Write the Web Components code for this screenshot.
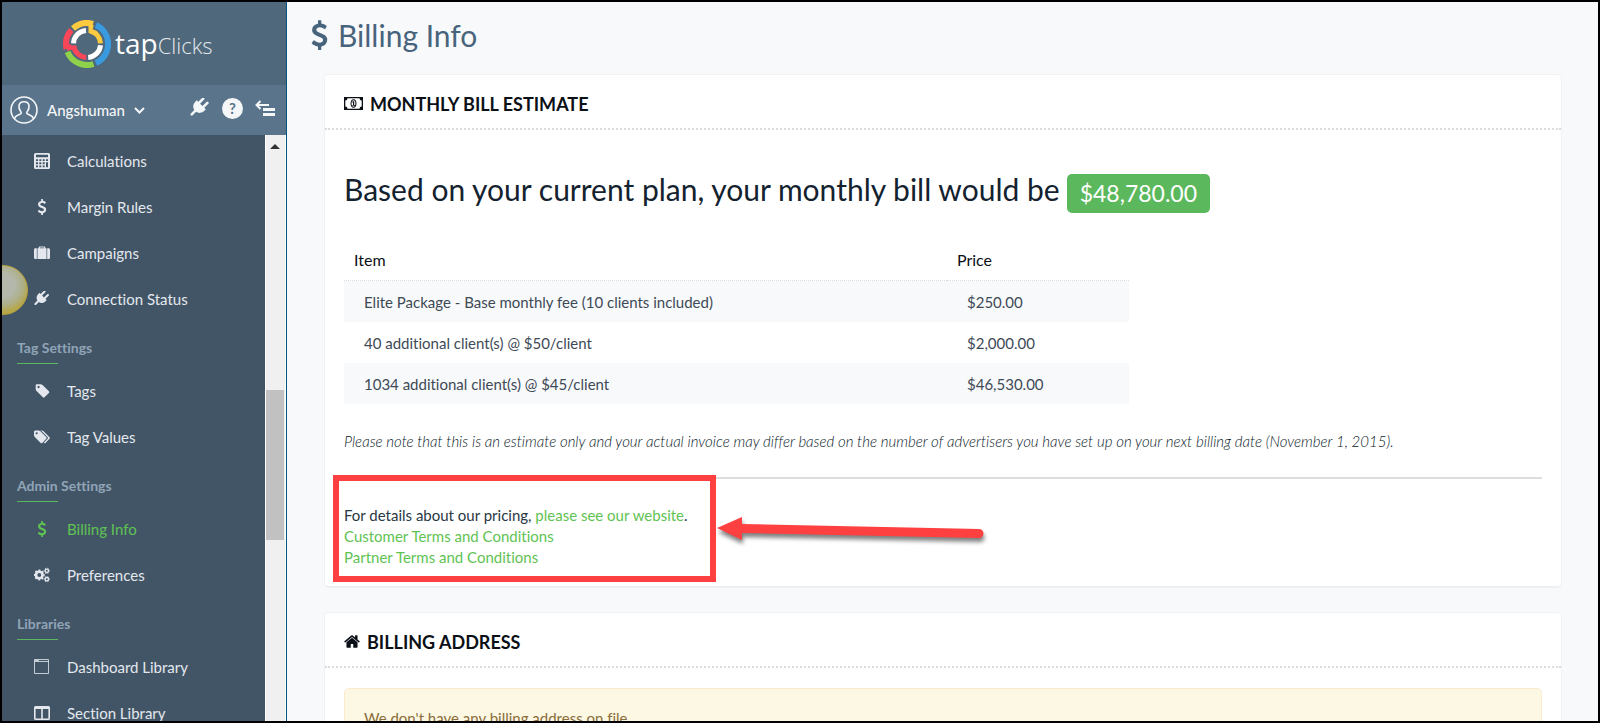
<!DOCTYPE html>
<html lang="en">
<head>
<meta charset="utf-8">
<title>Billing Info - tapClicks</title>
<style>
html,body{margin:0;height:100%;background:#000}
body{font-family:Lato,"Liberation Sans",sans-serif;font-variant-ligatures:none;color:#1b2a38;overflow:hidden}
</style>
</head>
<body>
<app-shell>
  <side-bar slot="side">
    <nav-item icon="calc">Calculations</nav-item>
    <nav-item icon="dollar">Margin Rules</nav-item>
    <nav-item icon="suitcase">Campaigns</nav-item>
    <nav-item icon="plug">Connection Status</nav-item>
    <nav-heading>Tag Settings</nav-heading>
    <nav-item icon="tag">Tags</nav-item>
    <nav-item icon="tags">Tag Values</nav-item>
    <nav-heading>Admin Settings</nav-heading>
    <nav-item icon="dollar" active>Billing Info</nav-item>
    <nav-item icon="cogs">Preferences</nav-item>
    <nav-heading>Libraries</nav-heading>
    <nav-item icon="window">Dashboard Library</nav-item>
    <nav-item icon="columns">Section Library</nav-item>
  </side-bar>
  <page-title icon="dollar">Billing Info</page-title>
  <info-panel icon="money" heading="Monthly Bill Estimate">
    <bill-estimate></bill-estimate>
  </info-panel>
  <info-panel icon="home" heading="Billing Address">
    <alert-box>We don't have any billing address on file.</alert-box>
  </info-panel>
</app-shell>
<script>
const ICONS = {
  dollar: ['384 0 1024 1792', '<path d="M1362 1185q0 153-99.5 263.5t-258.5 136.5v175q0 14-9 23t-23 9h-135q-13 0-22.5-9.5t-9.5-22.5v-175q-66-9-127.500-31t-101.500-44.500-74-48-46.500-37.500-17.500-18q-17-21-2-41l103-135q7-10 23-12 15-2 24 9l2 2q113 99 243 125 37 8 74 8 81 0 142.500-43t61.500-122q0-28-15-53t-33.500-42-58.500-37.500-66-32-80-32.500q-39-16-61.500-25t-61.500-26.500-62.500-31-56.500-35.500-53.500-42.500-43.500-49-35.500-58-21-66.500-8.500-78q0-138 98-242t255-134v-180q0-13 9.500-22.500t22.500-9.500h135q14 0 23 9t9 23v176q57 6 110.500 23t87 33.500 63.500 37.500 39 29 15 14q17 18 5 38l-81 146q-8 15-23 16-14 3-27-7-3-3-14.500-12t-39-26.500-58.500-32-74.500-26-85.500-11.500q-95 0-155 43t-60 111q0 26 8.500 48t29.500 41.500 39.500 33 56 31 60.500 27 70 27.500q53 20 81 31.500t76 35 75.500 42.500 62 50 53 63.500 31.500 76.500 13 94z"/>'],
  tag: ['-64 0 1792 1792', '<path d="M576 448q0-53-37.500-90.500t-90.500-37.500-90.500 37.500-37.500 90.500 37.500 90.500 90.500 37.500 90.500-37.500 37.500-90.500zm1067 576q0 53-37 90l-491 492q-39 37-91 37-53 0-90-37l-715-716q-38-37-64.500-101t-26.500-117v-416q0-52 38-90t90-38h416q53 0 117 26.500t102 64.500l715 714q37 39 37 91z"/>'],
  tags: ['0 0 1920 1792', '<path d="M448 448q0-53-37.500-90.500t-90.500-37.500-90.500 37.500-37.500 90.500 37.500 90.500 90.500 37.500 90.500-37.500 37.500-90.500zm1067 576q0 53-37 90l-491 492q-39 37-91 37-53 0-90-37l-715-716q-38-37-64.500-101t-26.500-117v-416q0-52 38-90t90-38h416q53 0 117 26.500t102 64.500l715 714q37 39 37 91zm384 0q0 53-37 90l-491 492q-39 37-91 37-36 0-59-14t-53-45l470-470q37-37 37-90 0-52-37-91l-715-714q-38-38-102-64.500t-117-26.500h224q53 0 117 26.500t102 64.500l715 714q37 39 37 91z"/>'],
  home: ['64 128 1664 1536', '<path d="M1472 992v480q0 26-19 45t-45 19h-384v-384h-256v384h-384q-26 0-45-19t-19-45v-480q0-1 .5-3t.5-3l575-474 575 474q1 2 1 6zm223-69l-62 74q-8 9-21 11h-3q-13 0-21-7l-692-577-692 577q-12 8-24 7-13-2-21-11l-62-74q-8-10-7-23.500t11-21.500l719-599q32-26 76-26t76 26l244 204v-195q0-14 9-23t23-9h192q14 0 23 9t9 23v408l219 182q10 8 11 21.500t-7 23.500z"/>'],
  plug: ['-60 60 1980 1980', '<path d="M1755 453q37 38 37 90.500t-37 90.500l-401 400 150 150-160 160q-163 163-389.500 186.500t-411.500-100.500l-362 362h-181v-181l362-362q-124-185-100.500-411.500t186.500-389.500l160-160 150 150 400-401q38-37 91-37t90 37 37 90.500-37 90.500l-400 401 234 234 401-400q38-37 91-37t90 37z"/>'],
  calc: ['0 0 16 16', '<path fill-rule="evenodd" d="M1.500 0h13Q16 0 16 1.500v13q0 1.500-1.500 1.500h-13Q0 16 0 14.500v-13Q0 0 1.500 0zM2 1.800v2.500h12V1.800zM2 6.200v1.900h2V6.200zm3.300 0v1.900h2V6.200zm3.400 0v1.900h2V6.200zm3.300 0v1.900h2V6.200zM2 9.300v1.900h2V9.300zm3.300 0v1.900h2V9.300zm3.400 0v1.900h2V9.300zM2 12.400v1.900h2v-1.900zm3.300 0v1.900h2v-1.900zm3.400 0v1.900h2v-1.900zM12 9.300v5h2v-5z"/>'],
  suitcase: ['0 0 17 16', '<path fill-rule="evenodd" d="M5 3V2Q5 1 6 1h5q1 0 1 1v1h1.300v11.500H3.700V3zm1.300 0h4.400v-.8H6.300zM1.500 3H3v11.500H1.500Q0 14.500 0 13V4.500Q0 3 1.500 3zM14 3h1.500Q17 3 17 4.500V13q0 1.500-1.500 1.500H14z"/>'],
  cogs: ['0 0 17 16', '<g fill="none" stroke="currentColor"><circle cx="5.600" cy="8" r="3.500" stroke-width="2.800"/><circle cx="5.600" cy="8" r="5" stroke-width="1.600" pathLength="32" stroke-dasharray="2.200 1.800" stroke-dashoffset="1"/><circle cx="13.600" cy="3.600" r="1.800" stroke-width="1.500"/><circle cx="13.600" cy="3.600" r="2.800" stroke-width="1" pathLength="24" stroke-dasharray="2 2" stroke-dashoffset="1"/><circle cx="13.600" cy="12.400" r="1.800" stroke-width="1.500"/><circle cx="13.600" cy="12.400" r="2.800" stroke-width="1" pathLength="24" stroke-dasharray="2 2" stroke-dashoffset="1"/></g>'],
  window: ['1 1 16 16', '<path fill="none" stroke="currentColor" opacity=".8" d="M1.500 1.500h14v14h-14zM1.500 3.500h14M2 2.500h4"/>'],
  columns: ['0 0 16 14', '<path fill-rule="evenodd" d="M1.500 0h13Q16 0 16 1.500v11q0 1.500-1.500 1.500h-13Q0 14 0 12.500v-11Q0 0 1.500 0zM1.600 3v9.400h5.600V3zm7.200 0v9.400h5.600V3z"/>'],
  money: ['0 0 19 13', '<path fill-rule="evenodd" d="M0 0h19v13H0zm3.500 1.300Q3.500 3.500 1.300 3.500v6q2.200 0 2.200 2.200h12q0-2.200 2.200-2.200v-6q-2.200 0-2.200-2.200z"/><path fill-rule="evenodd" d="M9.500 2.200c4 0 4 8.600 0 8.600s-4-8.600 0-8.600zm0 1c-2.600 0-2.600 6.600 0 6.600s2.600-6.600 0-6.600zM9 4.300h1.200v3.600h.8v.9H8.200v-.9H9V5.500h-.8v-.7z"/>'],
  user: ['0 0 28 28', '<g fill="none" stroke="currentColor" stroke-width="1.600"><circle cx="14" cy="14" r="13"/><path d="M14 5.800c-6.200 0-6 6.500-3.200 9.900.9 1.200.3 2-.6 2.400-2.600 1-5 1.600-5.600 4.400M14 5.800c6.200 0 6 6.500 3.200 9.900-.9 1.200-.3 2 .6 2.400 2.600 1 5 1.600 5.600 4.400"/></g>'],
  chevron: ['0 0 11 7', '<path fill="none" stroke="currentColor" stroke-width="2" d="M1 1l4.500 4.500L10 1"/>'],
  collapse: ['0 0 20 17', '<path fill="none" stroke="currentColor" stroke-width="2" d="M1.500 5H14M5.500 1l-4 4 4 4"/><path d="M8 8h12v3H8zM8 13h12v3H8z"/>']
};
function define(name, css, html, setup){
  const t = document.createElement('template');
  t.innerHTML = '<style>' + css + '</style>' + html;
  customElements.define(name, class extends HTMLElement{
    connectedCallback(){
      if(this.shadowRoot) return;
      this.attachShadow({mode:'open'}).append(t.content.cloneNode(true));
      if(setup) setup(this, this.shadowRoot);
    }
  });
}
const setIcon = (host, root) => root.querySelector('ui-icon').setAttribute('name', host.getAttribute('icon'));

customElements.define('ui-icon', class extends HTMLElement{
  static observedAttributes = ['name'];
  connectedCallback(){ this.draw(); }
  attributeChangedCallback(){ this.draw(); }
  draw(){
    const icon = ICONS[this.getAttribute('name')];
    if(!icon) return;
    if(!this.shadowRoot) this.attachShadow({mode:'open'});
    this.shadowRoot.innerHTML = '<style>:host{display:inline-flex;width:16px;height:16px;flex:none}svg{width:100%;height:100%;fill:currentColor}</style><svg aria-hidden="true" viewBox="' + icon[0] + '">' + icon[1] + '</svg>';
  }
});

define('app-shell', `
:host{box-sizing:border-box;display:grid;grid-template-columns:285px minmax(0,1fr);height:100vh;border:2px solid #000;overflow:hidden;position:relative}
main{background:#f8f9fb;overflow:hidden;padding:0 36px 0 37px;display:flex;flex-direction:column;gap:24px}
main ::slotted(*){flex:none}
.bubble{position:absolute;left:-24px;top:263px;width:48px;height:48px;border:1px solid #b9a33c;border-radius:50%;background:radial-gradient(circle at 50% 40%,#b4b8ac 30%,#aeb08a 52%,#b5a646 72%)}
.side{display:grid;min-height:0}
`, `<div class="side"><slot name="side"></slot></div><main><slot></slot></main><div class="bubble" aria-hidden="true"></div>`);

define('brand-logo', `
:host{display:flex;align-items:center;gap:4px;height:83px;padding-left:61px;box-sizing:border-box;background:#4f687b;color:#fff;font-family:"Open Sans",sans-serif}
svg{width:48px;height:48px;flex:none}
.word{display:flex;align-items:baseline;line-height:40px}
.tap{font-size:28px}
.clicks{font-size:22px;font-weight:300;color:#e4e9ed}
`, `<svg viewBox="-24 -24 48 48" aria-hidden="true"><g fill="none" stroke-width="6">
<path stroke="#3a9ae0" d="M8.900-19.100A21 21 0 0 1 8.900 19.100"/>
<path stroke="#8fd14a" d="M6.500 20A21 21 0 0 1-19.500 7.900"/>
<path stroke="#fa4659" d="M-20.400 5A21 21 0 0 1-15.600-14"/>
<path stroke="#fdca40" d="M-14-15.600A21 21 0 0 1 6-20.100"/></g>
<g fill="none" stroke-width="5">
<path stroke="#fdca40" d="M3.500-13A13.500 13.500 0 0 1 13.500-.7"/>
<path stroke="#fff" d="M13.500 1.200A13.500 13.500 0 0 1 1.200 13.500"/>
<path stroke="#fa4659" d="M-.7 13.500A13.500 13.500 0 0 1-13.300 2.500"/>
<path stroke="#fff" d="M-13.500-.7A13.500 13.500 0 0 1-1-13.500"/></g>
<path fill="#fdca40" d="M1.500-20L6.800-19 4.500-10.500 1.500-11z"/><path fill="#fa4659" d="M-20 7L-19-1-15 1.500-10.500 1.500-11 4.500z"/></svg>
<div class="word"><span class="tap">tap</span><span class="clicks">Clicks</span></div>`);

define('user-bar', `
:host{display:flex;align-items:center;height:50px;background:#5a758b;color:#f4f6f8;padding:0 11px 0 8px;box-sizing:border-box}
button{display:flex;align-items:center;border:0;background:none;padding:0;margin:0;font:inherit;color:inherit}
.user{gap:9px;font-size:15px;font-weight:500}
.user ui-icon:first-child{width:28px;height:28px}
.user ui-icon:last-child{width:11px;height:7px}
.tools{display:flex;align-items:center;gap:12px;margin-left:auto;padding-bottom:4px}
.plug ui-icon{width:20px;height:20px}
.help{width:21px;height:21px;border-radius:50%;background:#f4f6f8;color:#5a758b;justify-content:center;font-size:15px;font-weight:700;line-height:21px}
.fold ui-icon{width:20px;height:17px}
`, `<button class="user" type="button"><ui-icon name="user"></ui-icon><span>Angshuman</span><ui-icon name="chevron"></ui-icon></button>
<div class="tools"><button class="plug" type="button" aria-label="Connections"><ui-icon name="plug"></ui-icon></button><button class="help" type="button">?</button><button class="fold" type="button" aria-label="Collapse menu"><ui-icon name="collapse"></ui-icon></button></div>`);

define('side-bar', `
:host{display:grid;grid-template-rows:auto auto minmax(0,1fr);min-height:0;background:#425566;border-right:1px solid #00567c;box-sizing:border-box}
.body{display:flex;min-height:0}
nav{flex:1;overflow:hidden;padding-top:3px}
.track{width:21px;box-sizing:border-box;background:#f0f0f0;border-left:1px solid #fff;border-right:1px solid #fff;padding:0 1px 0 0;display:flex;flex-direction:column;align-items:center}
.up{border:5px solid transparent;border-top:0;border-bottom-color:#333;margin-top:9px}
.thumb{width:18px;height:150px;background:#c1c1c1;margin-top:241px}
`, `<brand-logo></brand-logo><user-bar></user-bar><div class="body"><nav><slot></slot></nav><div class="track" aria-hidden="true"><div class="up"></div><div class="thumb"></div></div></div>`);

define('nav-item', `
:host{display:block;color:#e4e8ee}
:host([active]){color:#5fc353}
a{display:flex;align-items:center;gap:17px;height:46px;padding-left:32px;color:inherit;text-decoration:none;font-size:15px}
ui-icon{width:16px;height:16px}
`, `<a href="#"><ui-icon></ui-icon><span><slot></slot></span></a>`, setIcon);

define('nav-heading', `
:host{display:block;height:46px;padding:14px 0 0 15px;box-sizing:border-box;color:#90a4b7}
h2{margin:0;font-size:14px;line-height:24px;font-weight:700}
i{display:block;width:41px;height:1px;margin-top:3px;background:#5cb85c}
`, `<h2><slot></slot></h2><i></i>`);

define('page-title', `
:host{display:block;margin:14px 0 -4px -13px;color:#48647c}
h1{margin:0;display:flex;align-items:center;gap:10px;font-size:30px;font-weight:400;line-height:38px}
ui-icon{width:17px;height:30px}
`, `<h1><ui-icon></ui-icon><span><slot></slot></span></h1>`, setIcon);

define('info-panel', `
:host{display:block;background:#fff;border:1px solid #f0f1f2;border-bottom:2px solid #eeeff0;border-radius:5px}
h2{margin:0;display:flex;align-items:center;gap:7px;height:53px;padding:4px 19px 0;box-sizing:border-box;font-size:18px;font-weight:700;color:#0b1016;text-transform:uppercase}
.head{border-bottom:2px dotted #dcdcdc}
.body{padding:20px 19px 0}
ui-icon{width:19px;height:13px}
:host([icon="home"]) ui-icon{width:16px;height:15px}
`, `<div class="head"><h2><ui-icon></ui-icon><span></span></h2></div><div class="body"><slot></slot></div>`, (h,r)=>{
  setIcon(h,r); r.querySelector('span').textContent = h.getAttribute('heading');
});

define('price-badge', `
:host{display:inline-block;background:#5cb85c;color:#fff;border-radius:5px;font-size:23px;font-weight:400;line-height:39px;padding:0 13px}
`, `<slot></slot>`);

define('bill-table', `
:host{display:block;width:785px;max-width:100%}
table{width:100%;border-collapse:collapse;font-size:15px;table-layout:fixed}
th{text-align:left;font-weight:400;color:#0b1016;height:41px;padding:0 10px;font-size:16px;border-bottom:1px dotted #ddd}
th:first-child{width:583px}
td{height:41px;padding:0 20px;color:#3e4a56;line-height:20px}
tbody tr:nth-child(odd){background:#f8f9fb}
`, `<table><thead><tr><th>Item</th><th>Price</th></tr></thead><tbody>
<tr><td>Elite Package - Base monthly fee (10 clients included)</td><td>$250.00</td></tr>
<tr><td>40 additional client(s) @ $50/client</td><td>$2,000.00</td></tr>
<tr><td>1034 additional client(s) @ $45/client</td><td>$46,530.00</td></tr></tbody></table>`);

define('callout-arrow', `
:host{display:block;width:272px;height:36px}
svg{display:block;width:100%;height:100%;overflow:visible;filter:drop-shadow(1px 4px 2px rgba(0,0,0,.5))}
`, `<svg viewBox="0 0 272 36" aria-hidden="true"><path fill="#ff4040" d="M0 12L25 1v7l237 5a4 4 0 0 1 0 9L25 17v7z"/></svg>`);

define('pricing-details', `
:host{display:block;position:relative;margin:0 0 0 -11px;width:383px;height:107px;box-sizing:border-box;border:6px solid #ff4040;padding:24px 5px 0;font-size:15px;line-height:21px;color:#2a3744}
p{margin:0;white-space:nowrap}
a{color:#5fc353;text-decoration:none}
callout-arrow{position:absolute;left:378px;top:35px}
`, `<p>For details about our pricing, <a href="#">please see our website</a>.</p><p><a href="#">Customer Terms and Conditions</a></p><p><a href="#">Partner Terms and Conditions</a></p><callout-arrow></callout-arrow>`);

define('bill-estimate', `
:host{display:block}
h3{margin:0;padding:17px 0 26px;display:flex;align-items:flex-end;gap:7px;font-size:30px;font-weight:400;line-height:44px;color:#14222f}
h3 span{padding-bottom:2px}
p{margin:0;padding:27px 0 26px;font-size:15px;line-height:20px;font-style:italic;font-weight:300;color:#0c1b2a}
hr{margin:0 0 -4px;border:0;border-top:2px solid #ddd}
pricing-details{margin-bottom:4px}
`, `<h3><span>Based on your current plan, your monthly bill would be</span><price-badge>$48,780.00</price-badge></h3>
<bill-table></bill-table>
<p>Please note that this is an estimate only and your actual invoice may differ based on the number of advertisers you have set up on your next billing date (November 1, 2015).</p>
<hr><pricing-details></pricing-details>`);

define('alert-box', `
:host{display:block;border:1px solid #faebcc;border-radius:5px;background:#fcf8e3;color:#8a6d3b;padding:19px;font-size:15px;line-height:20px}
`, `<div role="alert"><slot></slot></div>`);
</script>
</body>
</html>
